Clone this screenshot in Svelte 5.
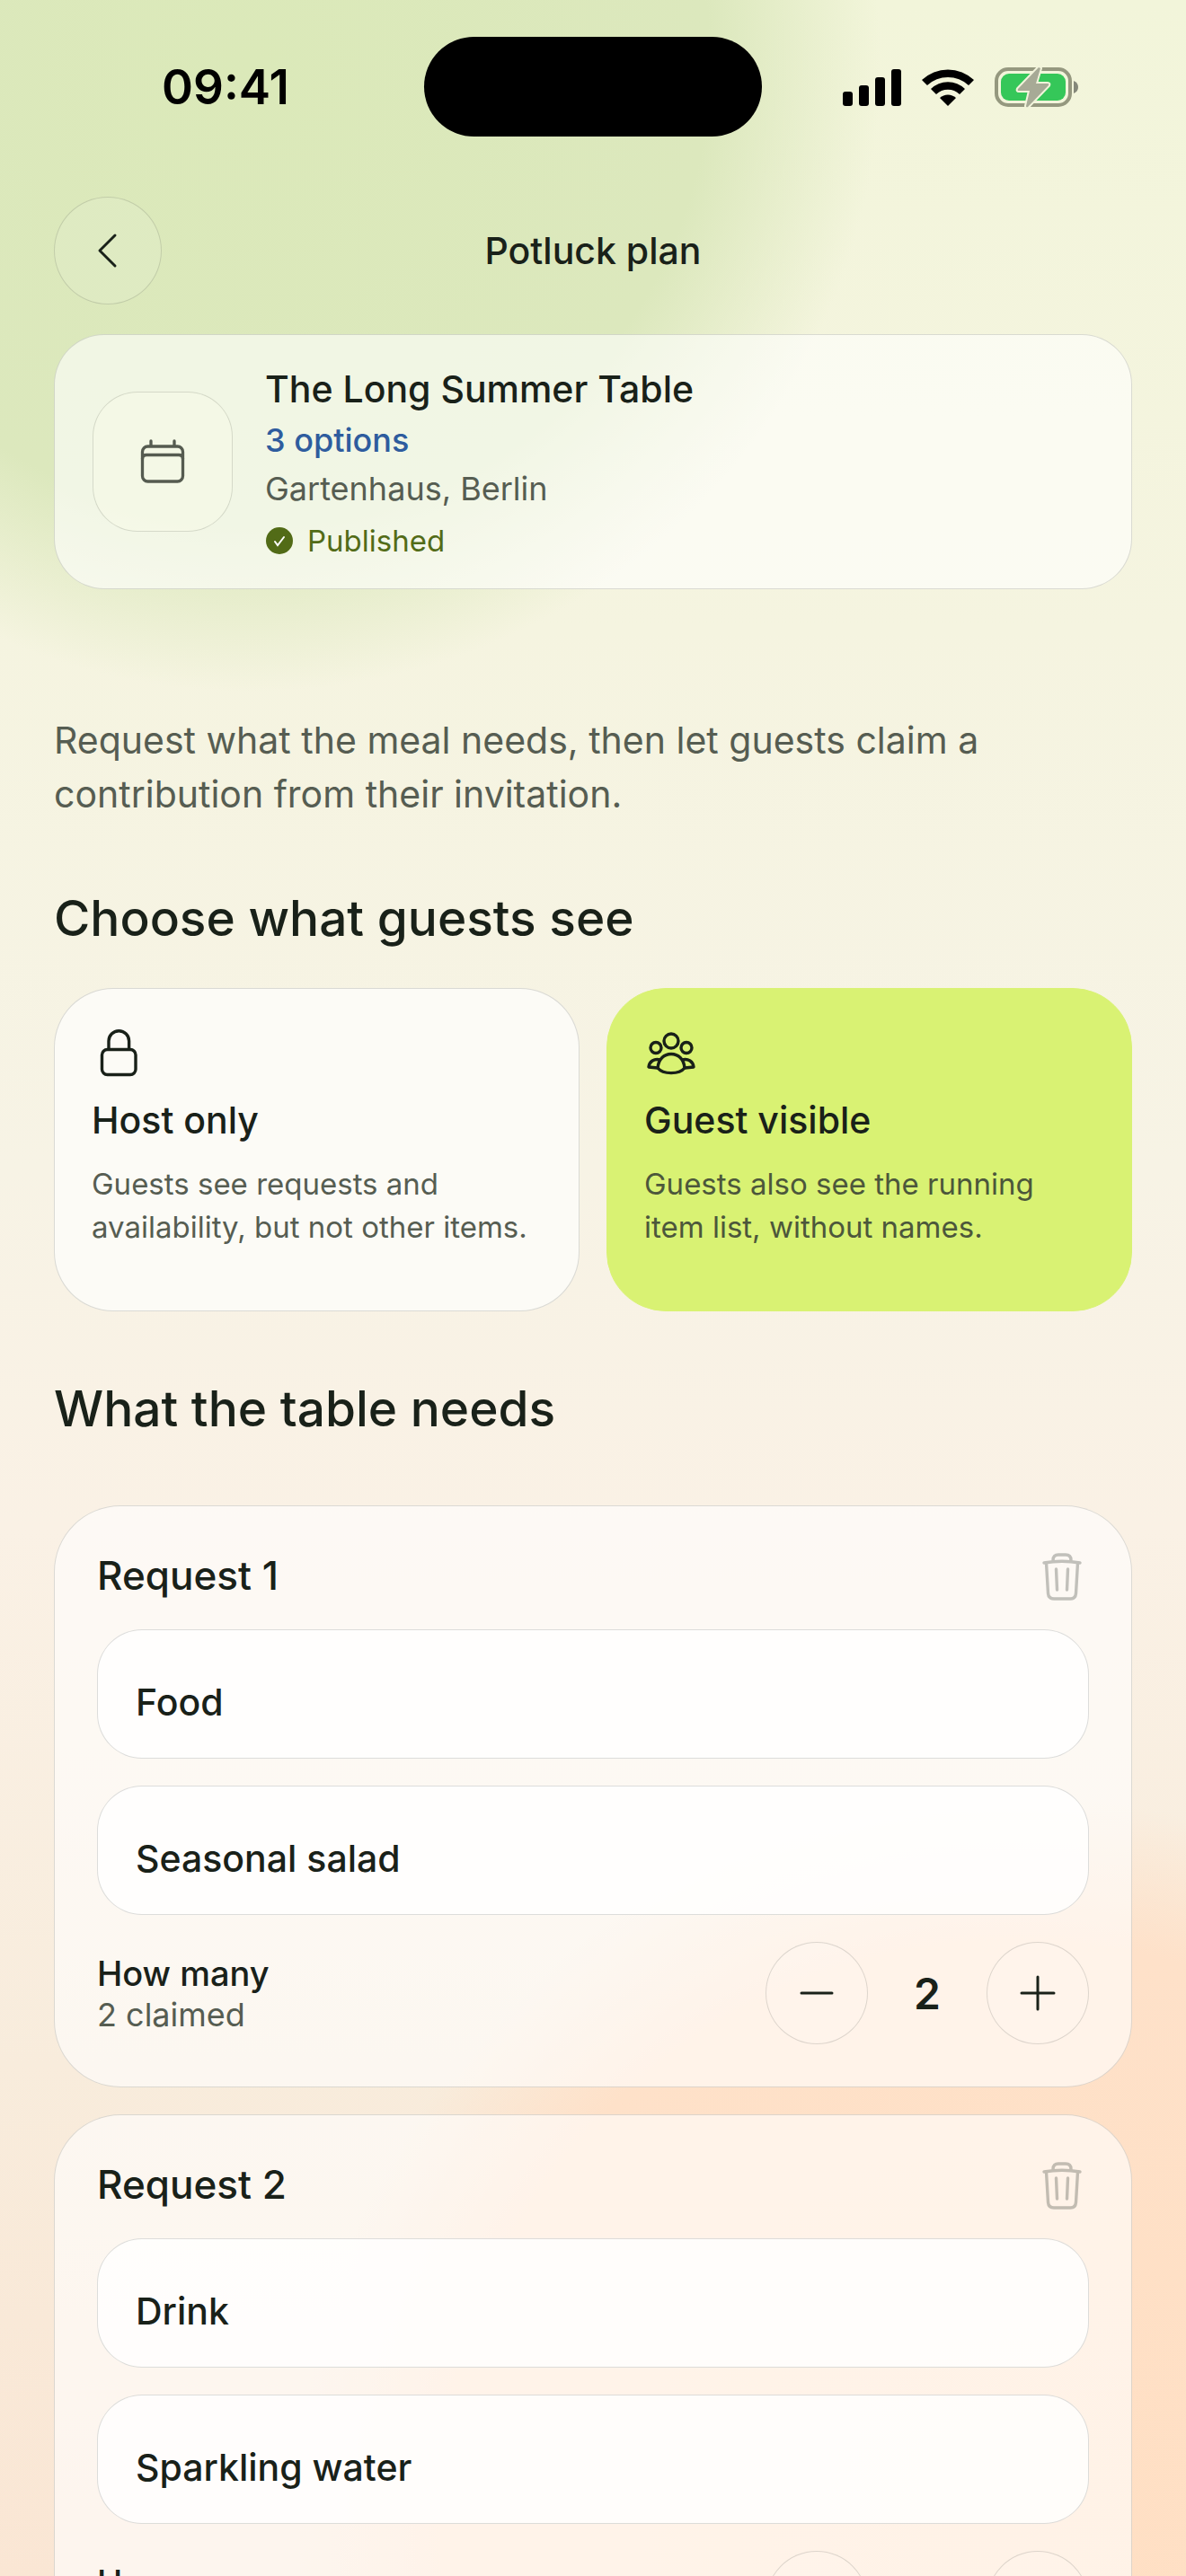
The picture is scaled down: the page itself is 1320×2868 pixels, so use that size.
<script lang="ts">
    type Visibility = "host" | "guest";

    interface Request {
        id: number;
        kind: string;
        item: string;
        amount: number;
        claimed: number;
    }

    let visibility: Visibility = $state("guest");

    let requests: Request[] = $state([
        { id: 1, kind: "Food", item: "Seasonal salad", amount: 2, claimed: 2 },
        { id: 2, kind: "Drink", item: "Sparkling water", amount: 2, claimed: 1 }
    ]);

    const options: { value: Visibility; title: string; text: string }[] = [
        { value: "host", title: "Host only", text: "Guests see requests and availability, but not other items." },
        { value: "guest", title: "Guest visible", text: "Guests also see the running item list, without names." }
    ];

    function removeRequest(id: number) {
        requests = requests.filter((r) => r.id !== id);
    }
</script>

<div class="screen">
    <div class="status-bar">
        <div class="time">09:41</div>
        <div class="island"></div>
        <div class="indicators">
            <svg width="65" height="42" viewBox="0 0 65 42" aria-hidden="true">
                <rect x="0" y="26" width="11" height="16" rx="3" />
                <rect x="18" y="19" width="11" height="23" rx="3" />
                <rect x="36" y="10" width="11" height="32" rx="3" />
                <rect x="54" y="1" width="11" height="41" rx="3" />
            </svg>
            <svg width="58" height="42" viewBox="0 0 58 42" aria-hidden="true">
                <path d="M0 13 A42 42 0 0 1 58 13 L52 19 A34 34 0 0 0 6 19 Z" />
                <path d="M10 23 A27 27 0 0 1 48 23 L42 29 A19 19 0 0 0 16 29 Z" />
                <path d="M20 33 A13 13 0 0 1 38 33 L29 42 Z" />
            </svg>
            <svg width="94" height="46" viewBox="0 0 94 46" aria-hidden="true">
                <rect x="2" y="3" width="82" height="40" rx="13" fill="none" stroke="#95987f" stroke-width="4" />
                <rect x="7" y="8" width="72" height="30" rx="9" fill="#35c759" />
                <path d="M88 16 Q93 18 93 23 Q93 28 88 30 Z" fill="#85887a" />
                <path
                    d="M49 1 L26 25 Q25 27 27 27 L39 27 L35 44 Q35 46 37 45 L60 21 Q61 19 59 19 L46 19 L51 2 Z"
                    fill="#a7aa96" stroke="#f2f4db" stroke-width="4" paint-order="stroke" stroke-linejoin="round" />
            </svg>
        </div>
    </div>

    <header class="nav">
        <button class="round back" aria-label="Back">
            <svg width="42" height="42" viewBox="0 0 42 42" aria-hidden="true">
                <path d="M29 4 L12 21 L29 38" />
            </svg>
        </button>
        <h1>Potluck plan</h1>
    </header>

    <main>
        <section class="event">
            <div class="event-icon">
                <svg width="54" height="54" viewBox="0 0 54 54" aria-hidden="true">
                    <rect x="4.5" y="10" width="45" height="39" rx="6" />
                    <path d="M4.5 24 Q4.5 19.5 9 19.5 H45 Q49.5 19.5 49.5 24 M14 4 V9 M40 4 V9" />
                </svg>
            </div>
            <div class="event-info">
                <h2>The Long Summer Table</h2>
                <a href="#options">3 options</a>
                <p class="place">Gartenhaus, Berlin</p>
                <p class="published">
                    <svg width="32" height="32" viewBox="0 0 32 32" aria-hidden="true">
                        <circle cx="16" cy="16" r="15" />
                        <path d="M11 17 L14 21 L21 12" />
                    </svg>
                    Published
                </p>
            </div>
        </section>

        <p class="intro">Request what the meal needs, then let guests claim a contribution from their invitation.</p>

        <h2 class="heading">Choose what guests see</h2>
        <div class="choices" id="options">
            {#each options as option}
                <button
                    class="choice"
                    class:selected={visibility === option.value}
                    aria-pressed={visibility === option.value}
                    onclick={() => (visibility = option.value)}
                >
                    {#if option.value === "host"}
                        <svg width="60" height="60" viewBox="0 0 60 60" aria-hidden="true">
                            <rect x="11.5" y="26.5" width="37.5" height="28" rx="6" />
                            <path d="M19 26 V17 A11.3 11.3 0 0 1 41.6 17 V26" />
                        </svg>
                    {:else}
                        <svg width="60" height="60" viewBox="0 0 60 60" aria-hidden="true">
                            <circle cx="30" cy="17" r="8" />
                            <circle cx="13" cy="24.5" r="6" />
                            <circle cx="47" cy="24.5" r="6" />
                            <path d="M15 47 C16 37 22 31.5 30 31.5 C38 31.5 44 37 45 47 C39 54.5 21 54.5 15 47 Z" />
                            <path d="M18 38 C11 36 5.5 40 5 46 L15 47 M42 38 C49 36 54.5 40 55 46 L45 47" />
                        </svg>
                    {/if}
                    <span class="choice-title">{option.title}</span>
                    <span class="choice-text">{option.text}</span>
                </button>
            {/each}
        </div>

        <h2 class="heading">What the table needs</h2>
        <div class="requests">
            {#each requests as request, i (request.id)}
                <section class="request">
                    <div class="request-head">
                        <h3>Request {i + 1}</h3>
                        <button class="trash" aria-label="Remove request {i + 1}" onclick={() => removeRequest(request.id)}>
                            <svg width="60" height="60" viewBox="0 0 60 60" aria-hidden="true">
                                <path d="M10 16 Q30 12.5 50 16 M20 14 V13 Q20 7 26 7 H34 Q40 7 40 13 V14" />
                                <path d="M12.5 16 L14.5 50 Q15 56 21 56 H39.5 Q45 56 45.5 50 L47.5 16" />
                                <path d="M23.5 23 L24.5 46 M36.5 23 L35.5 46" />
                            </svg>
                        </button>
                    </div>
                    <input type="text" aria-label="Kind" bind:value={request.kind} />
                    <input type="text" aria-label="Item" bind:value={request.item} />
                    <div class="amount">
                        <div class="amount-label">
                            <span class="how-many">How many</span>
                            <span class="claimed">{request.claimed} claimed</span>
                        </div>
                        <button class="round step" aria-label="Fewer" onclick={() => request.amount--}>
                            <svg width="42" height="42" viewBox="0 0 42 42" aria-hidden="true">
                                <path d="M4 21 H38" />
                            </svg>
                        </button>
                        <output>{request.amount}</output>
                        <button class="round step" aria-label="More" onclick={() => request.amount++}>
                            <svg width="42" height="42" viewBox="0 0 42 42" aria-hidden="true">
                                <path d="M3 21 H39 M21 3 V39" />
                            </svg>
                        </button>
                    </div>
                </section>
            {/each}
        </div>
    </main>
</div>

<style>
    :global(body) {
        margin: 0;
    }

    .screen {
        --ink: #192119;
        --muted: #565d52;
        --line: rgba(25, 33, 25, 0.15);

        height: 100vh;
        overflow-y: auto;
        scrollbar-width: none;
        color: var(--ink);
        font-family: Inter, "Liberation Sans", sans-serif;
        background:
            radial-gradient(circle at 280px 70px, #dbe9b9 0, #dce8bd 510px, rgba(220, 232, 189, 0) 700px),
            radial-gradient(circle at 1130px 2800px, #ffdfc3 0, #fee1c9 640px, rgba(254, 225, 201, 0) 800px),
            linear-gradient(#f2f5da 0, #f5f4e0 700px, #f7f3e5 1300px, #faf1e5 1700px, #f8ecdc 2300px, #fae6d4 2868px);
    }

    h1, h2, h3, p {
        margin: 0;
        font-weight: 500;
    }

    button {
        margin: 0;
        padding: 0;
        border: 0;
        background: none;
        color: inherit;
        font: inherit;
        text-align: left;
        cursor: pointer;
    }

    svg {
        display: block;
        flex: none;
    }

    .status-bar {
        display: grid;
        grid-template-columns: 1fr 376px 1fr;
        align-items: center;
        height: 111px;
        padding: 41px 0 67px;
    }

    .time {
        padding-left: 30px;
        text-align: center;
        font-size: 53px;
        font-weight: 600;
        color: #000;
    }

    .island {
        height: 111px;
        border-radius: 56px;
        background: #000;
    }

    .indicators {
        display: flex;
        align-items: center;
        justify-content: center;
        gap: 23px;
        padding-right: 30px;
    }

    .nav {
        display: grid;
        grid-template-columns: 120px 1fr 120px;
        align-items: center;
        padding: 0 60px;
        margin-bottom: 33px;
    }

    .nav h1 {
        font-size: 41px;
        text-align: center;
    }

    .round {
        display: flex;
        flex: none;
        align-items: center;
        justify-content: center;
        box-sizing: border-box;
        border: 1px solid var(--line);
        border-radius: 50%;
    }

    .round svg {
        fill: none;
        stroke: var(--ink);
        stroke-width: 3;
        stroke-linecap: round;
        stroke-linejoin: round;
    }

    .back {
        width: 120px;
        height: 120px;
        background: rgba(255, 255, 255, 0.1);
    }

    main {
        padding: 0 60px 60px;
    }

    .event {
        display: flex;
        align-items: center;
        gap: 36px;
        padding: 22px 42px;
        border: 1px solid var(--line);
        border-radius: 56px;
        background: rgba(255, 255, 255, 0.6);
    }

    .event-icon {
        display: flex;
        align-items: center;
        justify-content: center;
        box-sizing: border-box;
        width: 156px;
        height: 156px;
        border: 1px solid var(--line);
        border-radius: 50px;
        background: rgba(250, 252, 232, 0.4);
    }

    .event-icon svg {
        fill: none;
        stroke: #555b50;
        stroke-width: 3.3;
        stroke-linecap: round;
    }

    .event-info {
        display: flex;
        flex-direction: column;
        padding-top: 8px;
    }

    .event-info h2 {
        font-size: 41px;
        line-height: 60px;
    }

    .event-info a {
        color: #2e5c9e;
        font-size: 36px;
        font-weight: 500;
        line-height: 54px;
        text-decoration: none;
    }

    .place {
        color: var(--muted);
        font-size: 36px;
        font-weight: 400;
        line-height: 54px;
    }

    .published {
        display: flex;
        align-items: center;
        gap: 15px;
        color: #526b17;
        font-size: 33px;
        font-weight: 400;
        line-height: 62px;
    }

    .published circle {
        fill: #526b17;
    }

    .published path {
        fill: none;
        stroke: #fff;
        stroke-width: 2;
        stroke-linecap: round;
    }

    .intro {
        margin-top: 138px;
        color: var(--muted);
        font-size: 41px;
        font-weight: 400;
        line-height: 60px;
    }

    .heading {
        margin-top: 72px;
        font-size: 55px;
        line-height: 72px;
    }

    .choices {
        display: grid;
        grid-template-columns: 1fr 1fr;
        gap: 30px;
        margin-top: 42px;
    }

    .choice {
        display: flex;
        flex-direction: column;
        box-sizing: border-box;
        min-height: 360px;
        padding: 41px;
        border: 1px solid var(--line);
        border-radius: 66px;
        background: #fcfbf6;
    }

    .choice.selected {
        border-color: #d9f273;
        background: #d9f273;
    }

    .choice svg {
        fill: none;
        stroke: var(--ink);
        stroke-width: 3.4;
        stroke-linejoin: round;
    }

    .choice-title {
        margin-top: 18px;
        font-size: 41px;
        font-weight: 500;
        line-height: 54px;
    }

    .choice-text {
        margin-top: 20px;
        color: var(--muted);
        font-size: 33px;
        line-height: 48px;
    }

    .selected .choice-text {
        color: #4c573b;
    }

    .requests {
        display: flex;
        flex-direction: column;
        gap: 30px;
        margin-top: 72px;
    }

    .request {
        display: flex;
        flex-direction: column;
        gap: 30px;
        padding: 47px;
        border: 1px solid var(--line);
        border-radius: 74px;
        background: rgba(255, 255, 255, 0.6);
    }

    .request-head {
        display: flex;
        align-items: center;
        justify-content: space-between;
        height: 60px;
    }

    .request-head h3 {
        font-size: 44px;
    }

    .trash svg {
        fill: none;
        stroke: var(--ink);
        stroke-width: 3.4;
        stroke-linecap: round;
        stroke-linejoin: round;
        opacity: 0.26;
    }

    input {
        box-sizing: border-box;
        width: 100%;
        height: 144px;
        padding: 18px 42px 0;
        border: 1px solid var(--line);
        border-radius: 50px;
        outline: none;
        background: rgba(255, 255, 255, 0.8);
        color: var(--ink);
        font-family: inherit;
        font-size: 41px;
        font-weight: 500;
    }

    .amount {
        display: flex;
        align-items: center;
        gap: 30px;
    }

    .amount-label {
        display: flex;
        flex: 1;
        flex-direction: column;
    }

    .how-many {
        font-size: 38px;
        font-weight: 500;
        line-height: 48px;
    }

    .claimed {
        color: var(--muted);
        font-size: 36px;
        line-height: 44px;
    }

    .step {
        width: 114px;
        height: 114px;
        background: rgba(255, 255, 255, 0.1);
    }

    output {
        width: 72px;
        font-size: 48px;
        font-weight: 600;
        text-align: center;
    }
</style>
